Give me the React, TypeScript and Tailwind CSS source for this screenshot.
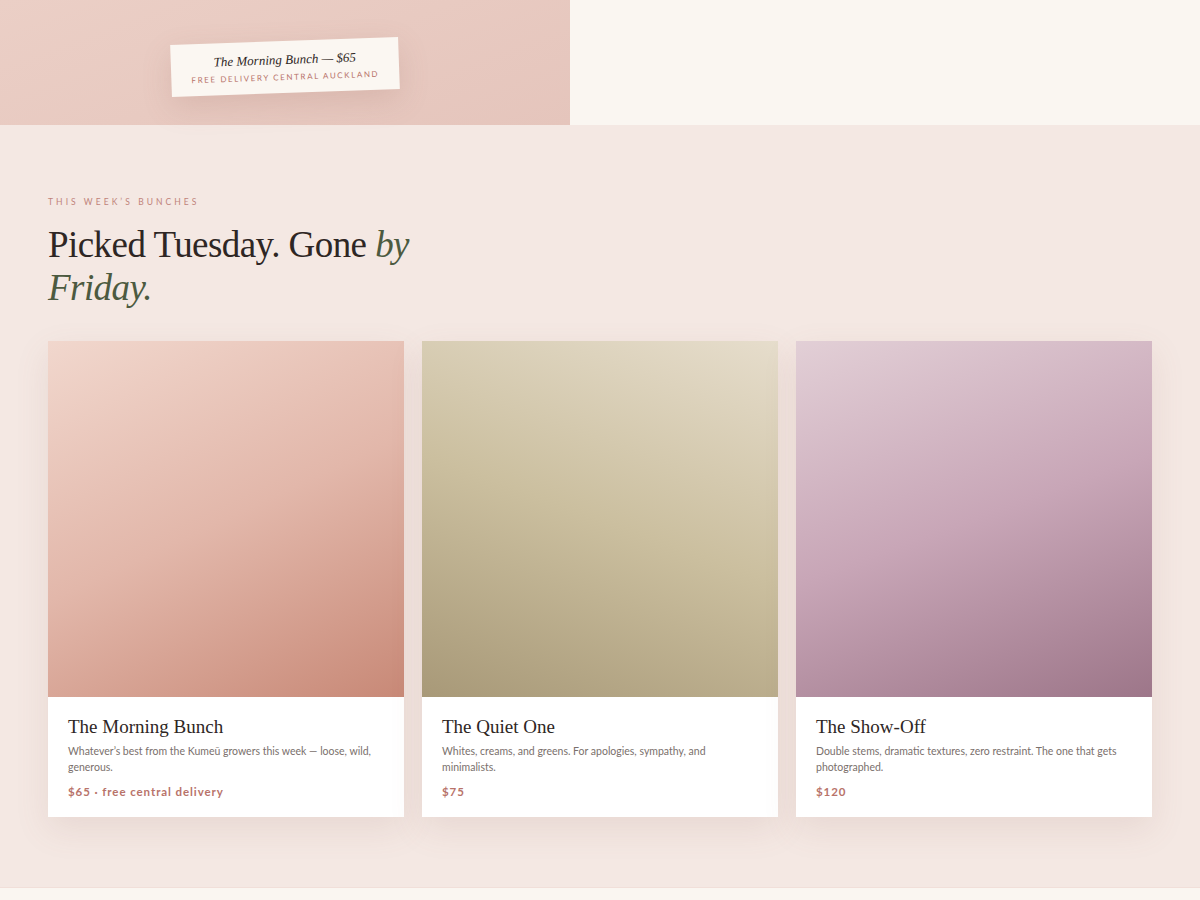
import React from 'react';

const serif = "font-['Liberation_Serif','DejaVu_Serif',serif]";
const sans = "font-['Lato','Open_Sans','Liberation_Sans',sans-serif]";

const bunches = [
  {
    name: 'The Morning Bunch',
    blurb: 'Whatever’s best from the Kumeū growers this week — loose, wild, generous.',
    price: '$65 · free central delivery',
    swatch: 'bg-[linear-gradient(155deg,#f1d7cd_0%,#e2b7aa_50%,#c88977_100%)]',
  },
  {
    name: 'The Quiet One',
    blurb: 'Whites, creams, and greens. For apologies, sympathy, and minimalists.',
    price: '$75',
    swatch: 'bg-[linear-gradient(200deg,#e6ddcc_0%,#cbbf9f_50%,#a89978_100%)]',
  },
  {
    name: 'The Show-Off',
    blurb: 'Double stems, dramatic textures, zero restraint. The one that gets photographed.',
    price: '$120',
    swatch: 'bg-[linear-gradient(160deg,#e2cfd6_0%,#c8a6b7_50%,#9d7689_100%)]',
  },
];

const App = () => {
  return (
    <div className="w-full min-h-[900px] bg-[#faf6f1]">
      {/* Hero tail */}
      <div className="flex h-[125px]">
        <div className="relative w-[570px] h-full bg-[linear-gradient(160deg,#ebcfc6_0%,#e5c5bc_100%)]">
          {/* price tag */}
          <div className="absolute left-[171px] top-[41px] w-[228px] -rotate-2 bg-[#fbf7f2] py-[11px] text-center shadow-[0_10px_30px_rgba(150,100,90,0.18)]">
            <p className={`${serif} italic text-[13px] leading-[16px] text-[#2e2624]`}>The Morning Bunch — $65</p>
            <p className={`${sans} mt-[4px] text-[8px] leading-[10px] tracking-[0.2em] text-[#b8736a]`}>
              FREE DELIVERY CENTRAL AUCKLAND
            </p>
          </div>
        </div>
        <div className="flex-1 h-full bg-[#faf6f1]" />
      </div>

      {/* This week's bunches */}
      <section className="bg-[#f4e8e3] px-12 pt-[72px] pb-[70px] border-b border-[#f1dfd9]">
        <p className={`${sans} text-[8.5px] leading-[10px] tracking-[0.36em] text-[#c0837a]`}>THIS WEEK’S BUNCHES</p>
        <h2 className={`${serif} mt-[16px] max-w-[410px] text-[37px] leading-[43px] text-[#2e2624] tracking-[-0.015em]`}>
          Picked Tuesday. Gone <em className="text-[#4c5a40]">by</em> <em className="text-[#4c5a40]">Friday.</em>
        </h2>

        <div className="mt-[32px] grid grid-cols-3 gap-[18px]">
          {bunches.map((b) => (
            <div key={b.name} className="bg-white shadow-[0_12px_32px_rgba(150,100,90,0.12)]">
              <div className={`h-[356px] ${b.swatch}`} />
              <div className="px-5 pt-[19px] pb-[18px]">
                <h3 className={`${serif} text-[19px] leading-[22px] text-[#2e2624]`}>{b.name}</h3>
                <p className={`${sans} mt-[5px] text-[10.5px] leading-[16px] text-[#7a706c]`}>{b.blurb}</p>
                <p className={`${sans} mt-[10px] text-[11.5px] leading-[14px] tracking-[0.08em] text-[#b8736a] font-bold`}>
                  {b.price}
                </p>
              </div>
            </div>
          ))}
        </div>
      </section>
    </div>
  );
};

export default App;
